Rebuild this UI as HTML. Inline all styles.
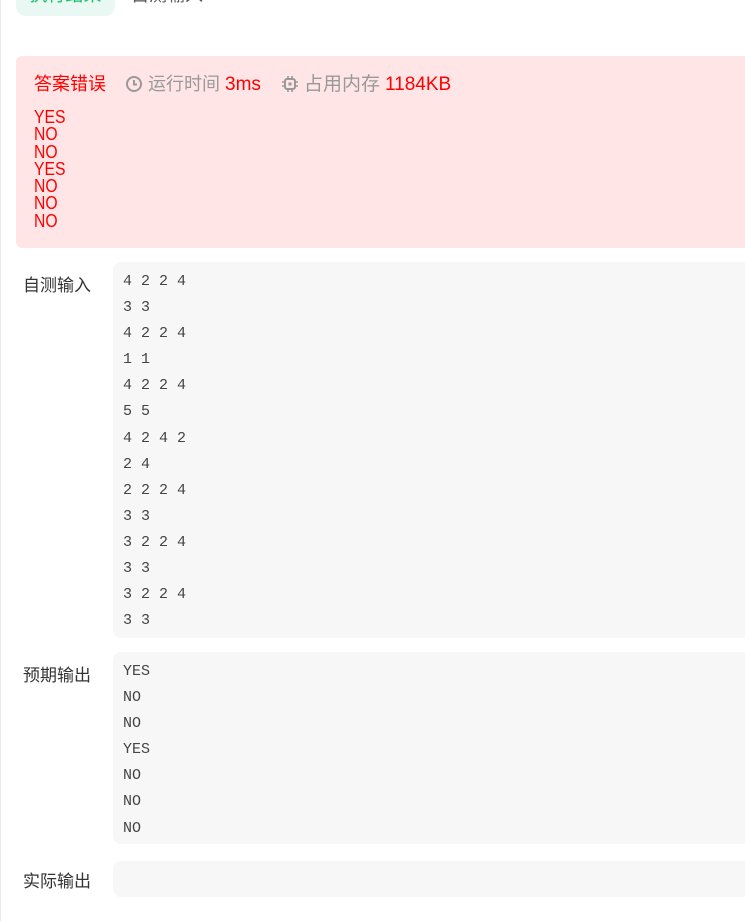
<!DOCTYPE html>
<html><head><meta charset="utf-8"><style>
body{margin:0;width:745px;height:921px;background:#fff;overflow:hidden;position:relative;font-family:"Liberation Sans","Noto Sans CJK SC",sans-serif;}
.lb{position:absolute;left:0;top:0;width:1px;height:921px;background:#e8e8e8}
.tab{position:absolute;left:16px;top:-20px;width:99px;height:36px;background:#eaf8f3;border-radius:10px;color:#19be6b;font-size:18px;line-height:30px;text-align:center}
.tab2{position:absolute;left:131px;top:-20px;color:#555;font-size:18px;line-height:30px}
.res{position:absolute;left:16px;top:56px;width:740px;height:192px;background:#ffe5e5;border-radius:6px}
.hd{position:absolute;left:18px;top:16px;font-size:18px;line-height:24px;color:#f00;white-space:nowrap}
.hd span.n{font-size:19px}
.g{color:#999}
.out{position:absolute;left:18px;top:52px;font-size:18.5px;line-height:17.3px;color:#f00;transform:scaleX(0.85);transform-origin:left}
.lab{position:absolute;left:23px;font-size:17px;color:#333}
.box{position:absolute;left:113px;width:650px;background:#f7f7f7;border-radius:8px;font-family:"Liberation Mono","DejaVu Sans Mono",monospace;font-size:15px;line-height:26.1px;color:#444;padding-left:10px;box-sizing:border-box}
</style></head><body>
<div class="lb"></div>
<div class="tab">执行结果</div><div class="tab2">自测输入</div>
<div class="res">
<div class="hd">答案错误<span style="display:inline-block;width:19px"></span><span class="g"><svg width="18" height="18" viewBox="0 0 18 18" style="vertical-align:-3px"><circle cx="9" cy="9" r="7" fill="none" stroke="#999" stroke-width="2"/><path d="M9 5v4.5h3" fill="none" stroke="#999" stroke-width="2"/></svg> 运行时间 </span><span class="n">3ms</span><span style="display:inline-block;width:20px"></span><span class="g"><svg width="18" height="18" viewBox="0 0 18 18" style="vertical-align:-3px"><rect x="4" y="4" width="10" height="10" rx="2" fill="none" stroke="#999" stroke-width="2"/><rect x="7.5" y="7.5" width="3" height="3" fill="#999"/><path d="M7 1v3M11 1v3M7 14v3M11 14v3M1 7h3M1 11h3M14 7h3M14 11h3" stroke="#999" stroke-width="1.6"/></svg> <span style="font-size:19px">占用内存</span> </span><span class="n">1184KB</span></div>
<div class="out">YES<br>NO<br>NO<br>YES<br>NO<br>NO<br>NO</div>
</div>
<div class="lab" style="top:271px">自测输入</div>
<div class="box" style="top:262px;height:376px;padding-top:7px">4 2 2 4<br>3 3<br>4 2 2 4<br>1 1<br>4 2 2 4<br>5 5<br>4 2 4 2<br>2 4<br>2 2 2 4<br>3 3<br>3 2 2 4<br>3 3<br>3 2 2 4<br>3 3</div>
<div class="lab" style="top:661px">预期输出</div>
<div class="box" style="top:652px;height:192px;padding-top:7px">YES<br>NO<br>NO<br>YES<br>NO<br>NO<br>NO</div>
<div class="lab" style="top:867px">实际输出</div>
<div class="box" style="top:861px;height:36px"></div>
</body></html>
